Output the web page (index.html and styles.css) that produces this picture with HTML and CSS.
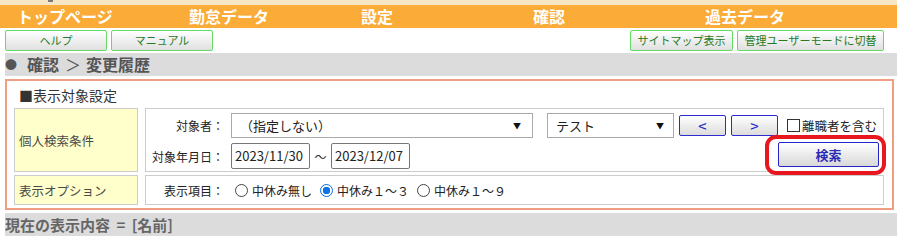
FILE: index.html
```html
<!DOCTYPE html>
<html lang="ja">
<head>
<meta charset="utf-8">
<title>変更履歴</title>
<link rel="stylesheet" href="styles.css">
</head>
<body>
<div class="topstrip"><span class="mark"></span></div>
<nav class="nav">
  <a>トップページ</a>
  <a>勤怠データ</a>
  <a>設定</a>
  <a>確認</a>
  <a>過去データ</a>
</nav>
<div class="toolbar">
  <div class="group">
    <button class="gbtn w102">ヘルプ</button>
    <button class="gbtn w102">マニュアル</button>
  </div>
  <div class="group">
    <button class="gbtn w103">サイトマップ表示</button>
    <button class="gbtn w147">管理ユーザーモードに切替</button>
  </div>
</div>
<div class="crumb"><span class="dot">●</span><span class="c1">確認</span><span class="gt">＞</span><span class="c2">変更履歴</span></div>
<section class="box">
  <div class="box-title">■表示対象設定</div>
  <div class="grid">
    <div class="lbl">個人検索条件</div>
    <div class="cell cond">
      <div class="line">
        <span class="flabel">対象者：</span>
        <div class="sel sel1"><span>（指定しない）</span><span class="arr">▼</span></div>
        <div class="sel sel2"><span>テスト</span><span class="arr">▼</span></div>
        <button class="bbtn">&lt;</button>
        <button class="bbtn">&gt;</button>
        <span class="chk"></span><span class="chklbl">離職者を含む</span>
      </div>
      <div class="line line2">
        <span class="flabel">対象年月日：</span>
        <div class="inp">2023/11/30</div>
        <span class="tilde">～</span>
        <div class="inp">2023/12/07</div>
        <div class="search-wrap">
          <button class="sbtn">検索</button>
          <span class="annot"></span>
        </div>
      </div>
    </div>
    <div class="lbl">表示オプション</div>
    <div class="cell opts">
      <span class="flabel">表示項目：</span>
      <span class="radio"></span><span class="rlbl">中休み無し</span>
      <span class="radio on"></span><span class="rlbl">中休み１～３</span>
      <span class="radio"></span><span class="rlbl">中休み１～９</span>
    </div>
  </div>
</section>
<div class="current">現在の表示内容 <span class="eq">=</span> [名前]</div>
</body>
</html>
```
FILE: styles.css
```css
* { box-sizing: border-box; }
body {
  margin: 0;
  width: 897px;
  font-family: "Noto Sans CJK JP", "Noto Sans", sans-serif;
  color: #222;
  background: #fff;
}
.topstrip {
  height: 5px;
  background: #f7e6c6;
}
.mark {
  display: block;
  margin-left: 48px;
  width: 5px;
  height: 2px;
  background: #7a7a7a;
}
.nav {
  height: 23px;
  background: #fbab37;
  display: grid;
  grid-template-columns: repeat(5, 172px);
  padding-left: 17px;
}
.nav a {
  color: #fff;
  font-weight: bold;
  font-size: 16px;
  line-height: 23px;
  white-space: nowrap;
}
.toolbar {
  display: flex;
  justify-content: space-between;
  padding: 2px 13px 0 5px;
  height: 23px;
}
.group { display: flex; gap: 4px; }
.gbtn {
  height: 21px;
  border: 1px solid #62dc62;
  border-radius: 2px;
  background: linear-gradient(#ffffff, #e0e0e0);
  color: #267a26;
  font-family: inherit;
  font-size: 11px;
  line-height: 19px;
  padding: 0;
}
.w102 { width: 102px; }
.w103 { width: 103px; }
.w147 { width: 147px; }
.crumb {
  margin: 2px 0 0 5px;
  height: 23px;
  background: #dcdcdc;
  color: #555;
  font-weight: bold;
  font-size: 16px;
  line-height: 23px;
  white-space: nowrap;
  display: flex;
  align-items: center;
}
.dot {
  font-size: 12px;
  width: 22px;
  color: #555;
}
.c1 { margin-right: 6px; }
.gt { font-weight: normal; margin-right: 5px; }
.box {
  margin: 3px 3px 0 5px;
  border: 2px solid #ef9e84;
  padding: 3px 8px 3px 7px;
}
.box-title {
  height: 22px;
  line-height: 22px;
  font-size: 14px;
  color: #333;
  margin: 0 0 2px 5px;
}
.grid {
  display: grid;
  grid-template-columns: 124px 739px;
  grid-template-rows: 64px 30px;
  gap: 3px 7px;
}
.lbl {
  background: #ffffcc;
  border: 1px solid #cccccc;
  color: #4a4a4a;
  font-size: 12.5px;
  display: flex;
  align-items: center;
  padding-left: 4px;
}
.cell {
  border: 1px solid #cccccc;
  background: #fff;
  font-size: 13px;
}
.cond {
  padding: 4px 3px 0 0;
}
.line {
  display: flex;
  align-items: center;
  height: 25px;
}
.line2 {
  margin-top: 5px;
  height: 26px;
}
.flabel {
  width: 78px;
  margin-right: 7px;
  text-align: right;
  flex: none;
  color: #222;
  font-size: 12px;
}
.sel {
  height: 25px;
  border: 1px solid #aaaaaa;
  display: flex;
  align-items: center;
  justify-content: space-between;
  background: #fff;
  flex: none;
}
.sel1 { width: 302px; padding: 0 11px 0 8px; }
.sel2 { width: 127px; margin-left: 14px; padding: 0 9px 0 8px; }
.arr { font-size: 8px; color: #111; }
.bbtn {
  width: 47px;
  height: 21px;
  margin-left: 5px;
  border: 1px solid #2b2bd0;
  border-radius: 2px;
  background: linear-gradient(#ffffff, #dcdcdc);
  color: #2222cc;
  font-family: inherit;
  font-size: 15px;
  line-height: 17px;
  padding: 0;
}
.chk {
  width: 13px;
  height: 13px;
  border: 1px solid #333;
  background: #fff;
  margin-left: 9px;
  flex: none;
}
.chklbl {
  margin-left: 2px;
  font-size: 12.5px;
  white-space: nowrap;
}
.inp {
  width: 79px;
  height: 26px;
  border: 1px solid #777;
  border-radius: 2px;
  line-height: 24px;
  padding-left: 3px;
  font-size: 13px;
  flex: none;
}
.tilde {
  width: 21px;
  text-align: center;
  font-size: 12px;
  color: #333;
}
.search-wrap {
  margin-left: auto;
  margin-right: 1px;
  position: relative;
  align-self: flex-start;
  margin-top: -1px;
}
.sbtn {
  display: block;
  width: 101px;
  height: 25px;
  border: 1px solid #2424c8;
  border-radius: 2px;
  background: linear-gradient(#ffffff, #d8d8d8);
  color: #2a2ab8;
  font-family: inherit;
  font-weight: bold;
  font-size: 13px;
  padding: 0;
}
.annot {
  position: absolute;
  left: -13px;
  top: -7px;
  width: 121px;
  height: 40px;
  border: 4px solid #e8161f;
  border-radius: 11px;
  pointer-events: none;
}
.opts {
  display: flex;
  align-items: center;
}
.radio {
  width: 13px;
  height: 13px;
  border: 1px solid #444;
  border-radius: 50%;
  margin-left: 5px;
  flex: none;
  background: #fff;
}
.opts .flabel + .radio { margin-left: 4px; }
.radio.on {
  border: 1px solid #0a6fe0;
  background: radial-gradient(circle, #0a74e8 0 3.5px, #fff 4px);
}
.rlbl {
  margin: 0 3px 0 4px;
  font-size: 12px;
  color: #222;
  white-space: nowrap;
}
.current {
  margin: 3px 0 0 5px;
  height: 23px;
  background: #dcdcdc;
  color: #666;
  font-weight: bold;
  font-size: 15px;
  line-height: 23px;
  white-space: nowrap;
}
.eq { margin: 0 3px; }
```
